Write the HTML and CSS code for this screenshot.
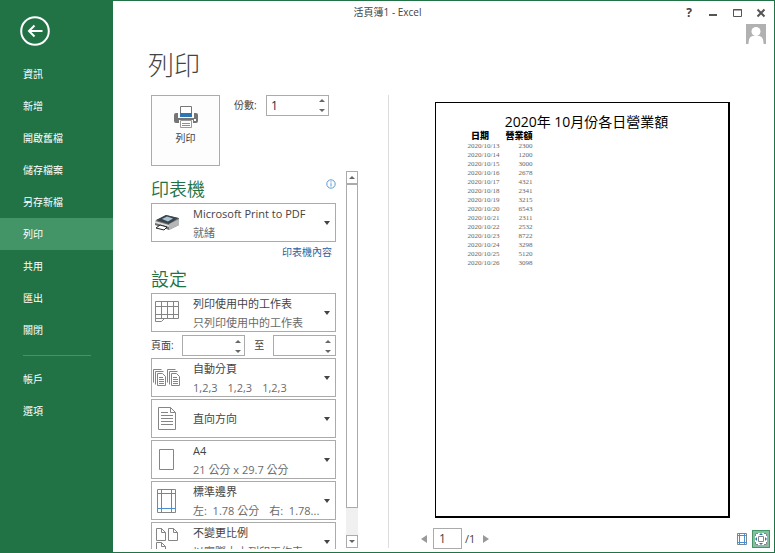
FILE: index.html
```html
<!DOCTYPE html>
<html lang="zh-Hant">
<head>
    <meta charset="UTF-8" />
    <title>活頁簿1 - Excel</title>
    <link rel="stylesheet" href="styles.css">
</head>
<body>
    <nav class="sidebar">
        <button class="back" aria-label="返回">
            <svg width="30" height="30" viewBox="0 0 30 30">
                <circle cx="15" cy="15" r="13.8" />
                <path d="M22.5 15H9.5M14.5 9.5L9 15l5.5 5.5" class="arrow" />
            </svg>
        </button>
        <ul>
            <li><a href="#info">資訊</a></li>
            <li><a href="#new">新增</a></li>
            <li><a href="#open">開啟舊檔</a></li>
            <li><a href="#save">儲存檔案</a></li>
            <li><a href="#saveas">另存新檔</a></li>
            <li><a href="#print" class="active">列印</a></li>
            <li><a href="#share">共用</a></li>
            <li><a href="#export">匯出</a></li>
            <li><a href="#close">關閉</a></li>
        </ul>
        <hr>
        <ul>
            <li><a href="#account">帳戶</a></li>
            <li><a href="#options">選項</a></li>
        </ul>
    </nav>

    <div class="window-title">活頁簿1 - Excel</div>

    <main>
        <header>
            <div class="window-buttons">
                <button class="help" aria-label="說明">?</button>
                <button aria-label="最小化"><svg width="10" height="10"><path d="M1 7h8" stroke-width="2" /></svg></button>
                <button aria-label="最大化"><svg width="10" height="10"><path d="M1.5 1.5h8v7h-8zM1 2h9" /></svg></button>
                <button aria-label="關閉視窗"><svg width="10" height="10"><path d="M1.500 1.500l7 7M8.500 1.500l-7 7" stroke-width="2" /></svg></button>
            </div>
            <svg class="avatar" width="20" height="20" viewBox="0 0 20 20">
                <path d="M0 0h20v20H0z" fill="#b1b1b1" />
                <circle cx="10" cy="7.5" r="4.5" fill="#fff" />
                <path d="M2.5 20c0-6 2-8 5-8h5c3 0 5 2 5 8z" fill="#fff" />
            </svg>
        </header>

        <h1>列印</h1>

        <div class="content">
            <section class="options">
                <div class="print-row">
                    <button class="print">
                        <svg width="24" height="23" viewBox="0 0 24 23">
                            <path d="M6.5.5h11v9h-11z" fill="#fff" stroke="#777" />
                            <path d="M6 7h12v4H6z" fill="#2e75b6" />
                            <path d="M2 7h2v5h16V7h2q2 0 2 2v6q0 2-2 2h-3v-3H5v3H2q-2 0-2-2V9q0-2 2-2z" fill="#757575" />
                            <path d="M20 13h2v2h-2z" fill="#fff" />
                            <path d="M6.5 14.5h11v7h-11z" fill="#fff" stroke="#999" />
                            <path d="M8 17.5h8M8 19.5h8" stroke="#5b9bd5" />
                        </svg>
                        列印
                    </button>
                    <label for="copies">份數:</label>
                    <span class="spin">
                        <input id="copies" type="text" inputmode="numeric" value="1">
                        <button class="up" aria-label="增加份數"></button>
                        <button class="down" aria-label="減少份數"></button>
                    </span>
                </div>

                <div class="scroll">
                    <div class="panel">
                        <div class="panel-head">
                            <h2>印表機</h2>
                            <svg class="info" width="10" height="10" viewBox="0 0 10 10">
                                <circle cx="5" cy="5" r="4.2" />
                                <path d="M5 4.2v3.3M5 2.3v1.2" />
                            </svg>
                        </div>
                        <label class="picker">
                            <svg class="icon" width="32" height="37">
                                <path d="M3 17l11-6 13 3v7l-10 5-14-5z" fill="#6b6e70" />
                                <path d="M4 16l10-5 12 3-9 6z" fill="#3a444c" />
                                <path d="M10 15l5-2.5 6 2-5 3z" fill="#a9c4d3" />
                                <path d="M17 20l10-5v6l-10 5z" fill="#b4b6b8" />
                                <path d="M3 17l14 4v2L3 19z" fill="#dcdcdc" />
                                <path d="M4 24l4-3 7 2-3 3z" fill="#fff" stroke="#222" />
                            </svg>
                            <span class="lines">
                                <select><option>Microsoft Print to PDF</option></select>
                                <span class="desc">就緒</span>
                            </span>
                            <i class="caret"></i>
                        </label>
                        <a class="props" href="#properties">印表機內容</a>

                        <h2>設定</h2>
                        <label class="picker">
                            <svg class="icon" width="32" height="37">
                                <path d="M3.5 7.500h23v17h-23zM9.500 7.500v17M15.500 7.500v17M21.500 7.500v17M3.500 12.500h23M3.500 20.500h23M3.500 24.500v3h6l3-3" class="thin" />
                            </svg>
                            <span class="lines">
                                <select><option>列印使用中的工作表</option></select>
                                <span class="desc">只列印使用中的工作表</span>
                            </span>
                            <i class="caret"></i>
                        </label>
                        <div class="pages">
                            <label for="from">頁面:</label>
                            <span class="spin">
                                <input id="from" type="text" inputmode="numeric">
                                <button class="up" aria-label="增加起始頁"></button>
                                <button class="down" aria-label="減少起始頁"></button>
                            </span>
                            <label for="to">至</label>
                            <span class="spin">
                                <input id="to" type="text" inputmode="numeric">
                                <button class="up" aria-label="增加結束頁"></button>
                                <button class="down" aria-label="減少結束頁"></button>
                            </span>
                        </div>
                        <label class="picker">
                            <svg class="icon" width="32" height="37">
                                <path d="M1.5 23.5v-13h8M3.5 25.5v-13h8M5.5 14.5h5l3 3v9h-8zM7 18.5h4M7 20.5h5M7 22.5h5M7 24.5h5M15.5 23.5v-13h8M17.5 25.5v-13h8M19.5 14.5h5l3 3v9h-8zM21 18.5h4M21 20.5h5M21 22.5h5M21 24.5h5" class="thin" />
                            </svg>
                            <span class="lines">
                                <select><option>自動分頁</option></select>
                                <span class="desc sets"><span>1,2,3</span><span>1,2,3</span><span>1,2,3</span></span>
                            </span>
                            <i class="caret"></i>
                        </label>
                        <label class="picker">
                            <svg class="icon" width="32" height="37">
                                <path d="M6.5 7.5h12l5 5v17h-17zM18.5 7.5v5h5" class="thin" />
                                <path d="M9 12.5h7M9 15.5h12M9 18.5h12M9 21.5h12M9 24.5h12" class="thin" />
                            </svg>
                            <span class="lines">
                                <select aria-label="方向"><option>直向方向</option></select>
                            </span>
                            <i class="caret"></i>
                        </label>
                        <label class="picker">
                            <svg class="icon" width="32" height="37">
                                <path d="M7.5 8.5h14v20h-14z" class="thin" />
                            </svg>
                            <span class="lines">
                                <select><option>A4</option></select>
                                <span class="desc">21 公分 x 29.7 公分</span>
                            </span>
                            <i class="caret"></i>
                        </label>
                        <label class="picker">
                            <svg class="icon" width="32" height="37">
                                <path d="M5.5 7.5h18v23h-18z" class="thin" />
                                <path d="M9.5 8v22M19.5 8v22M6 11.5h17M6 26.5h17" class="blue" />
                            </svg>
                            <span class="lines">
                                <select><option>標準邊界</option></select>
                                <span class="desc sets"><span>左:&nbsp; 1.78 公分</span><span>右:&nbsp; 1.78...</span></span>
                            </span>
                            <i class="caret"></i>
                        </label>
                        <label class="picker">
                            <svg class="icon" width="32" height="37">
                                <path d="M4.5 5.5h5l4 4v8h-9zM9.5 5.5v4h4M16.5 5.5h5l4 4v8h-9zM21.5 5.5v4h4M4.5 19.5h5l4 4v8h-9zM9.5 19.5v4h4" class="thin" />
                            </svg>
                            <span class="lines">
                                <select><option>不變更比例</option></select>
                                <span class="desc">以實際大小列印工作表</span>
                            </span>
                            <i class="caret"></i>
                        </label>
                    </div>
                    <div class="scrollbar">
                        <button class="up" aria-label="向上捲動"></button>
                        <div class="thumb"></div>
                        <button class="down" aria-label="向下捲動"></button>
                    </div>
                </div>
            </section>

            <section class="preview">
                <div class="page">
                    <div class="page-header">2020年 10月份各日營業額</div>
                    <table>
                        <thead>
                            <tr><th>日期</th><th>營業額</th></tr>
                        </thead>
                        <tbody>
                            <tr><td>2020/10/13</td><td>2300</td></tr>
                            <tr><td>2020/10/14</td><td>1200</td></tr>
                            <tr><td>2020/10/15</td><td>3000</td></tr>
                            <tr><td>2020/10/16</td><td>2678</td></tr>
                            <tr><td>2020/10/17</td><td>4321</td></tr>
                            <tr><td>2020/10/18</td><td>2341</td></tr>
                            <tr><td>2020/10/19</td><td>3215</td></tr>
                            <tr><td>2020/10/20</td><td>6543</td></tr>
                            <tr><td>2020/10/21</td><td>2311</td></tr>
                            <tr><td>2020/10/22</td><td>2532</td></tr>
                            <tr><td>2020/10/23</td><td>8722</td></tr>
                            <tr><td>2020/10/24</td><td>3298</td></tr>
                            <tr><td>2020/10/25</td><td>5120</td></tr>
                            <tr><td>2020/10/26</td><td>3098</td></tr>
                        </tbody>
                    </table>
                </div>
                <footer>
                    <button class="step" aria-label="上一頁"><svg width="6" height="8"><path d="M6 0v8L0 4z" /></svg></button>
                    <input id="page" type="text" value="1" aria-label="頁碼">
                    <label for="page">/1</label>
                    <button class="step next" aria-label="下一頁"><svg width="6" height="8"><path d="M0 0v8l6-4z" /></svg></button>
                    <button class="tool" aria-label="顯示邊界">
                        <svg width="12" height="14">
                            <path d="M1.5 1.5h9v11h-9z" class="thin" />
                            <path d="M3.5 1v12M8.5 1v12M1 3.5h10M1 10.5h10" class="blue" />
                        </svg>
                    </button>
                    <button class="tool on" aria-label="縮放至頁面">
                        <svg width="14" height="14">
                            <path d="M1 1h12v12H1z" fill="#fff" />
                            <path d="M1.5 4V1.5H4M10 1.5h2.5V4M12.5 10v2.5H10M4 12.5H1.5V10M4.5 4.5h5v5h-5z" class="thin" />
                            <path d="M7 1l2 2H5zM7 13l2-2H5zM1 7l2-2v4zM13 7l-2-2v4z" fill="#2e75b6" />
                        </svg>
                    </button>
                </footer>
            </section>
        </div>
    </main>
</body>
</html>
```
FILE: styles.css
```css
* {
    box-sizing: border-box;
}

body {
    display: flex;
    height: 100vh;
    margin: 0;
    overflow: hidden;
    position: relative;
    font-family: "Open Sans", "Noto Sans CJK TC", sans-serif;
    font-size: 11px;
    color: #444;
    background: #fff;
}

button, input, select {
    font: inherit;
    color: inherit;
    margin: 0;
    padding: 0;
    border: none;
    border-radius: 0;
    background: none;
}

h1, h2, ul {
    margin: 0;
    padding: 0;
    font-family: "Noto Sans CJK TC", sans-serif;
    font-weight: 300;
}

svg {
    display: block;
    fill: none;
}

.thin {
    stroke: #858585;
    fill: none;
}

.blue {
    stroke: #4a8fd0;
    fill: none;
}

/* left menu */
.sidebar {
    flex: 0 0 113px;
    padding-top: 16px;
    background: #217346;
    color: #fff;
}

.back {
    display: block;
    margin: 0 0 12px 20px;
}

    .back svg {
        stroke: #fff;
        stroke-width: 2;
    }

.sidebar ul {
    list-style: none;
}

.sidebar a {
    display: block;
    padding-left: 23px;
    font-size: 10px;
    font-weight: 400;
    line-height: 32px;
    color: #fff;
    text-decoration: none;
}

    .sidebar a.active {
        background: #439467;
    }

.sidebar hr {
    height: 1px;
    margin: 9px 22px 7px 23px;
    border: none;
    background: #439467;
}

/* title runs over the whole window, menu included */
.window-title {
    position: absolute;
    top: 0;
    left: 0;
    right: 0;
    line-height: 25px;
    font-size: 10px;
    text-align: center;
    pointer-events: none;
}

main {
    flex: 1;
    min-width: 0;
    display: flex;
    flex-direction: column;
    border: 1px solid #217346;
    border-left: none;
}

header {
    display: flex;
    flex-direction: column;
    align-items: flex-end;
    padding-right: 8px;
}

.window-buttons {
    display: flex;
    gap: 14px;
    height: 23px;
    align-items: center;
}

    .window-buttons svg {
        stroke: #555;
    }

.help {
    width: 10px;
    font-size: 12px;
    font-weight: bold;
}

h1 {
    margin: 2px 0 13px 35px;
    font-size: 26px;
    line-height: 36px;
}

.content {
    flex: 1;
    min-height: 0;
    display: flex;
    padding-left: 38px;
}

.options {
    display: flex;
    flex-direction: column;
    padding-right: 30px;
    padding-bottom: 3px;
}

.print-row {
    display: flex;
    align-items: flex-start;
    margin-bottom: 5px;
    font-size: 10px;
}

    .print-row label {
        width: 32px;
        margin-left: 14px;
        line-height: 21px;
    }

.print {
    display: flex;
    flex-direction: column;
    align-items: center;
    gap: 1px;
    width: 69px;
    height: 71px;
    padding-top: 10px;
    border: 1px solid #ababab;
    background: #fdfdfd;
}

.spin {
    display: grid;
    grid-template-columns: 1fr 13px;
    width: 63px;
    height: 21px;
    border: 1px solid #ababab;
}

    .spin input {
        grid-row: span 2;
        width: 100%;
        min-width: 0;
        padding-left: 4px;
        font-size: 12px;
        color: #1f1f4a;
    }

.up, .down {
    display: flex;
    align-items: center;
    justify-content: center;
}

.up::before, .down::before {
    content: "";
    border: 3px solid transparent;
}

.up::before {
    border-top: none;
    border-bottom-color: #666;
}

.down::before {
    border-bottom: none;
    border-top-color: #666;
}

.scroll {
    flex: 1;
    min-height: 0;
    display: flex;
    gap: 10px;
}

.panel {
    width: 185px;
    overflow: hidden;
}

.panel-head {
    display: flex;
    justify-content: space-between;
    padding-top: 3px;
}

h2 {
    margin-bottom: 1px;
    font-size: 18px;
    font-weight: 350;
    line-height: 28px;
    color: #217346;
}

.info {
    margin-top: 5px;
    stroke: #5b9bd5;
}

.picker {
    display: flex;
    align-items: center;
    height: 39px;
    margin-bottom: 2px;
    border: 1px solid #ababab;
}

.icon {
    flex: none;
}

.lines {
    flex: 1;
    min-width: 0;
    padding-left: 9px;
    line-height: 19px;
    white-space: nowrap;
}

    .lines select {
        display: block;
        width: 100%;
        height: 19px;
        line-height: 19px;
        appearance: none;
    }

.desc {
    display: block;
    color: #6a6a6a;
}

.sets {
    display: flex;
    gap: 10px;
}

.caret {
    margin-right: 5px;
    border: 3px solid transparent;
    border-top: 4px solid #444;
    border-bottom: none;
}

.props {
    display: block;
    margin: 0 4px 4px;
    font-size: 10px;
    line-height: 16px;
    text-align: right;
    color: #2a5f9e;
    text-decoration: none;
}

.pages {
    display: flex;
    justify-content: space-between;
    margin: 3px 0 2px;
    font-size: 10px;
    line-height: 21px;
}

.scrollbar {
    display: flex;
    flex-direction: column;
    width: 12px;
    margin-bottom: 1px;
    background: #f0f0f0;
}

    .scrollbar button {
        flex: 0 0 13px;
        border: 1px solid #ababab;
        background: #fff;
    }

    .scrollbar .thumb {
        flex: 0 1 324px;
        margin-bottom: auto;
        border: 1px solid #ababab;
        background: #fff;
    }

/* right side */
.preview {
    flex: 1;
    display: flex;
    flex-direction: column;
    align-items: center;
    padding: 7px 0 3px 2px;
    background: linear-gradient(#ddd, #ddd) left top / 1px calc(100% - 4px) no-repeat;
}

.page {
    flex: 1;
    min-height: 0;
    aspect-ratio: 295 / 416;
    padding: 10px 0 0 32px;
    border: 1px solid #000;
    border-right-width: 2px;
    border-bottom-width: 2px;
    color: #000;
}

.page-header {
    margin-right: 22px;
    font-size: 14px;
    line-height: 18px;
    text-align: center;
}

table {
    width: 65px;
    border-collapse: collapse;
    font-family: "Liberation Serif", "Noto Sans CJK TC", serif;
    font-size: 7px;
    line-height: 9px;
    color: #666;
}

th, td {
    padding: 0;
    white-space: nowrap;
    text-align: right;
}

th {
    font-size: 9px;
    line-height: 11px;
    font-weight: 900;
    text-align: right;
    color: #000;
}

    th:first-child {
        padding-right: 10px;
        text-align: center;
    }

td:first-child {
    text-align: left;
}

footer {
    display: flex;
    align-items: center;
    align-self: stretch;
    height: 21px;
    margin-top: 10px;
    padding: 0 4px 0 31px;
}

    footer input {
        width: 29px;
        height: 21px;
        margin: 0 3px 0 6px;
        padding-left: 5px;
        border: 1px solid #ababab;
        font-size: 12px;
    }

.step svg {
    fill: #999;
}

.next {
    margin-left: 8px;
    margin-right: auto;
}

.tool {
    display: flex;
    align-items: center;
    justify-content: center;
    width: 18px;
    height: 18px;
}

    .tool.on {
        margin-left: 1px;
        border: 1px solid #439467;
        background: #86bfa0;
    }
```
